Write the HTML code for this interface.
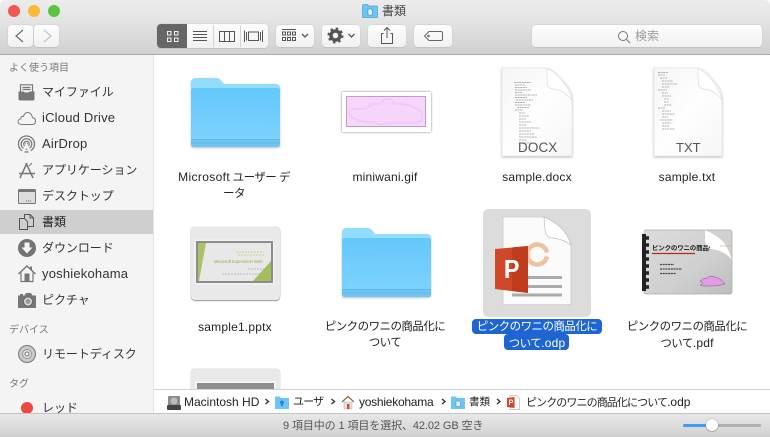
<!DOCTYPE html>
<html><head><meta charset="utf-8"><style>
html,body{margin:0;padding:0;background:#fff}
#w{position:relative;width:770px;height:437px;overflow:hidden;background:#fff;font-family:"Liberation Sans","Noto Sans CJK JP",sans-serif;color:#222}
#w>*{position:absolute}
.b{background:linear-gradient(#fdfdfd,#f1f1f1);border-radius:4px;box-shadow:0 0 0 .5px #cdcdcd,0 1px 0 #bbb;top:25px;height:22px}
.s{left:42px;font-size:12px;line-height:16px;color:#333;white-space:nowrap;letter-spacing:-.05px}
.e{letter-spacing:.2px;font-size:13px}
.h{left:9px;font-size:10px;line-height:14px;color:#777;white-space:nowrap}
.l{font-size:11.5px;line-height:16px;color:#222;white-space:nowrap;text-align:center;letter-spacing:-.55px;transform:translateX(-50%)}
.n{letter-spacing:.2px;font-size:12px}
.p{top:394px;font-size:12px;line-height:16px;color:#222;white-space:nowrap}
svg{position:absolute;overflow:visible}
</style></head><body><div id="w">

<div style="left:0;top:0;width:770px;height:54px;background:linear-gradient(#ececec,#e6e6e6 30%,#d1d1d1);border-bottom:1px solid #a9a9a9;border-radius:5px 5px 0 0"></div>
<div style="left:8px;top:5px;width:12px;height:12px;border-radius:50%;background:#f25750"></div>
<div style="left:28px;top:5px;width:12px;height:12px;border-radius:50%;background:#fbb93a"></div>
<div style="left:48px;top:5px;width:12px;height:12px;border-radius:50%;background:#5cc341"></div>

<svg style="left:362px;top:4px" width="16" height="14" viewBox="0 0 16 14"><path d="M.5 2Q.5 .5 2 .5H5.500L7 2H15.500V13.500H.5Z" fill="#6cc5f5" stroke="#4ba3d8" stroke-width=".7"/><path d="M6 5H9L10.500 6.500V11H6Z" fill="#e8f6fe" stroke="#2b86c0" stroke-width=".6"/></svg>
<div style="left:382px;top:3px;font-size:12px;line-height:16px;color:#444">書類</div>

<!-- nav -->
<div class="b" style="left:8px;width:25px"></div>
<div class="b" style="left:34px;width:25px"></div>
<svg style="left:8px;top:25px" width="52" height="22"><path d="M15 5L8 11L15 17" fill="none" stroke="#6a6a6a" stroke-width="1.200"/><path d="M36 5L43 11L36 17" fill="none" stroke="#c4c4c4" stroke-width="1.200"/></svg>

<!-- view seg -->
<div class="b" style="left:157px;width:111px;top:24px;height:24px"></div>
<div style="left:157px;top:24px;width:30px;height:24px;background:#666;border-radius:4px 0 0 4px"></div>
<div style="left:213px;top:25px;width:1px;height:22px;background:#d5d5d5"></div>
<div style="left:240px;top:25px;width:1px;height:22px;background:#d5d5d5"></div>
<svg style="left:157px;top:24px" width="111" height="24" fill="none" stroke-width="1">
<g stroke="#f0f0f0"><rect x="10.500" y="7.500" width="3.500" height="3.500"/><rect x="17.500" y="7.500" width="3.500" height="3.500"/><rect x="10.500" y="14" width="3.500" height="3.500"/><rect x="17.500" y="14" width="3.500" height="3.500"/></g>
<g stroke="#555"><path d="M36 7.500H50M36 10.500H50M36 13.500H50M36 16.500H50"/><rect x="62.500" y="7.500" width="15" height="10"/><path d="M67.500 7.500V17.500M72.500 7.500V17.500"/><rect x="91.500" y="8" width="10" height="8.500"/><path d="M89.500 8V16.500M103.500 8V16.500M105.500 6.500V18M87.500 6.500V18"/></g></svg>

<div class="b" style="left:276px;width:38px;top:25px;height:22px"></div>
<svg style="left:276px;top:25px" width="38" height="22" fill="none" stroke="#555"><path d="M6 4.500H20"/><rect x="6.500" y="7" width="3" height="3"/><rect x="11.500" y="7" width="3" height="3"/><rect x="16.500" y="7" width="3" height="3"/><rect x="6.500" y="12.500" width="3" height="3"/><rect x="11.500" y="12.500" width="3" height="3"/><rect x="16.500" y="12.500" width="3" height="3"/><path d="M26 9L29 12L32 9" stroke-width="1.300"/></svg>

<div class="b" style="left:322px;width:38px;top:25px;height:22px"></div>
<svg style="left:322px;top:25px" width="38" height="22" fill="none"><circle cx="13.500" cy="10.500" r="4.500" stroke="#555" stroke-width="3.500"/><circle cx="13.500" cy="10.500" r="7" stroke="#555" stroke-width="2" stroke-dasharray="2.500 3"/><path d="M26.500 9L29.500 12L32.500 9" stroke="#555" stroke-width="1.300"/></svg>

<div class="b" style="left:368px;width:38px;top:25px;height:22px"></div>
<svg style="left:368px;top:25px" width="38" height="22" fill="none" stroke="#555"><path d="M15.500 8.500H13.500V18.500H24.500V8.500H22.500M19 13V2.500M16 5.500L19 2.500L22 5.500"/></svg>

<div class="b" style="left:414px;width:38px;top:25px;height:22px"></div>
<svg style="left:414px;top:25px" width="38" height="22" fill="none" stroke="#666"><path d="M15 6.500H27Q28.500 6.500 28.500 8V14Q28.500 15.500 27 15.500H15L10.500 11Z"/><circle cx="14.500" cy="11" r=".8"/></svg>

<div class="b" style="left:532px;width:230px;top:25px;height:22px"></div>
<svg style="left:617px;top:30px" width="14" height="14" fill="none" stroke="#777"><circle cx="6" cy="6" r="4.500"/><path d="M9.500 9.500L13 13"/></svg>
<div style="left:635px;top:28px;font-size:12px;line-height:16px;color:#9a9a9a">検索</div>

<!-- sidebar -->
<div style="left:0;top:55px;width:153px;height:358px;background:#f4f4f4;border-right:1px solid #e3e3e3;overflow:hidden"></div>
<div style="left:0;top:210px;width:153px;height:24px;background:#cfcfcf"></div>

<div class="h" style="top:62px">よく使う項目</div>
<div class="s" style="top:84px">マイファイル</div>
<div class="s e" style="top:110px">iCloud Drive</div>
<div class="s e" style="top:136px">AirDrop</div>
<div class="s" style="top:162px">アプリケーション</div>
<div class="s" style="top:188px">デスクトップ</div>
<div class="s" style="top:214px;color:#222">書類</div>
<div class="s" style="top:240px">ダウンロード</div>
<div class="s e" style="top:266px">yoshiekohama</div>
<div class="s" style="top:292px">ピクチャ</div>
<div class="h" style="top:324px">デバイス</div>
<div class="s" style="top:346px">リモートディスク</div>
<div class="h" style="top:378px">タグ</div>
<div class="s" style="top:400px">レッド</div>

<svg style="left:17px;top:84px" width="20" height="16" fill="none" stroke="#777"><path d="M3.500 .8H15.500V9H3.500ZM5.500 3.500H13.500M5.500 5.500H13.500" stroke-width="1.200"/><path d="M2 8H6.500L7.500 10H11.500L12.500 8H17V15Q17 16 16 16H3Q2 16 2 15Z" fill="#777"/></svg>
<svg style="left:17px;top:110px" width="20" height="16" fill="none" stroke="#777"><path d="M5 14.500H15Q18.500 14.500 18.500 11Q18.500 8 15.500 7.800Q14.500 2.500 10.500 2.500Q7.500 2.500 6.500 6.500Q4 5.500 3.800 8.800Q1 9.500 1 11.800Q1 14.500 5 14.500Z" stroke-width="1"/></svg>
<svg style="left:17px;top:135px" width="20" height="18" fill="none" stroke="#777"><circle cx="9.500" cy="9" r="8" stroke-width="1.300"/><circle cx="9.500" cy="9" r="5.300" stroke-width="1.200"/><circle cx="9.500" cy="9" r="2.800" stroke-width="1.200"/><circle cx="9.500" cy="9" r="1" fill="#777"/><path d="M6 17L9.500 10L13 17" stroke="#f4f4f4" stroke-width="2.500"/></svg>
<svg style="left:17px;top:161px" width="20" height="18" fill="none" stroke="#777" stroke-width="1.500"><path d="M10 2L3 17M9 2L16 17M2 12.500H18"/><path d="M12 5L15 2" stroke-width="1"/></svg>
<svg style="left:18px;top:189px" width="18" height="15" fill="none"><rect x=".5" y=".5" width="17" height="14" rx="1" fill="#ddd" stroke="#777"/><rect x=".5" y=".5" width="17" height="2.500" fill="#777"/><path d="M8 12H13" stroke="#666" stroke-dasharray="1 1"/></svg>
<svg style="left:19px;top:214px" width="18" height="17" fill="none" stroke="#555"><path d="M5.500 4.500V.5H11L14.500 4V12.500H8.500"/><path d="M.5 4.500H5.500L8.500 7.500V15.500H.5ZM11 .5V4H14.500"/></svg>
<svg style="left:18px;top:239px" width="18" height="18"><circle cx="9" cy="9" r="9" fill="#737373"/><path d="M6.500 3.500H11.500V8.500H14.500L9 14.500L3.500 8.500H6.500Z" fill="#f4f4f4"/></svg>
<svg style="left:18px;top:265px" width="18" height="17" fill="none" stroke="#777"><path d="M.5 9L9 1L17.500 9" stroke-width="1.400"/><path d="M3 7.500V16.500H15V7.500" stroke-width="1.200"/><rect x="7" y="9" width="4" height="7.500" fill="#777"/><path d="M13 1.500V5" stroke-width="2"/></svg>
<svg style="left:18px;top:293px" width="18" height="15"><path d="M0 2.500H2V1H5V2.500H6.500L8 0H13L14.500 2.500H18V15H0Z" fill="#777"/><circle cx="10" cy="8.500" r="4.500" fill="#ddd" stroke="#666"/><circle cx="10" cy="8.500" r="2.500" fill="#999"/></svg>
<svg style="left:18px;top:345px" width="18" height="18"><circle cx="9" cy="9" r="8.500" fill="#c9c9c9" stroke="#777"/><circle cx="9" cy="9" r="4.500" fill="#e2e2e2" stroke="#999"/><circle cx="9" cy="9" r="2" fill="#f4f4f4" stroke="#777"/></svg>
<div style="left:21px;top:402px;width:12px;height:12px;background:#f0483e;border-radius:50%"></div>

<!-- row 1 -->
<svg style="left:190px;top:77px;filter:drop-shadow(0 1px 1px rgba(0,0,0,.25))" width="91" height="72" viewBox="0 0 91 72">
<defs><linearGradient id="g" x1="0" y1="0" x2="0" y2="1"><stop offset="0" stop-color="#64c8fb"/><stop offset="1" stop-color="#80d3fd"/></linearGradient>
<linearGradient id="pg" x1="0" y1="0" x2="1" y2="1"><stop offset="0" stop-color="#f5f5f5"/><stop offset=".5" stop-color="#fefefe"/><stop offset="1" stop-color="#f6f6f6"/></linearGradient></defs>
<g id="folder"><path d="M1 6Q1 1 6 1H26Q29 1 31 3.500L34 7H86Q90 7 90 12V20H1Z" fill="#93dcfd"/><path d="M1 14Q1 11 4 11H87Q90 11 90 14V67Q90 70 87 70H4Q1 70 1 67Z" fill="url(#g)"/><path d="M1 62H90V67Q90 70 87 70H4Q1 70 1 67Z" fill="#6fc5f1"/><path d="M1 62.500H90M1 66H90" stroke="#5db6e6" stroke-width="1" opacity=".8"/></g></svg>
<div class="l" style="left:234px;top:169px"><span class="n" style="letter-spacing:.35px">Microsoft</span> ユーザー デ<br>ータ</div>

<div style="left:342px;top:92px;width:89px;height:40px;background:#fff;box-shadow:0 0 2px rgba(0,0,0,.55)"></div>
<svg style="left:346px;top:96px" width="80" height="31"><rect x=".5" y=".5" width="79" height="30" fill="#f6d5fb" stroke="#c09ec2"/><path d="M3 15L7 13H20L25 8H35L38 3H45L48 8H55L62 9L70 12L76 16L76 24L70 27H40L35 29L28 26L18 26L6 22L3 18Z" fill="none" stroke="#f3c4f9" stroke-width="1.500"/></svg>
<div class="l n" style="left:385px;top:169px">miniwani.gif</div>

<svg style="left:501px;top:67px;filter:drop-shadow(0 1px 1px rgba(0,0,0,.28))" width="72" height="90" viewBox="0 0 72 90">
<path d="M1 1H42Q50 1 57 9L63 15Q71 23 71 32V89H1Z" fill="url(#pg)" stroke="#e6e6e6" stroke-width=".7"/>
<path d="M46 1Q46 16 47 19Q48 21.500 52 22Q62 22.500 71 33Q68 20 58 10Q52 4 46 1Z" fill="#fff" stroke="#dcdcdc" stroke-width=".7"/>
<path d="M13 15.500H30M14 18H24M14 20.500H26M14 23H30M14 25.500H22M14 28H36M14 30.500H26M15 33H32M14 35.500H24M14 38H30M16 40.500H28M14 43H22M18 46H24M18 49H28M18 52H25M18 55H30M18 58H26M18 61H38M18 64H30M18 67H34M18 70H36M18 73H26M18 76H30" stroke="#999" stroke-width=".7" stroke-dasharray="2 .6" fill="none"/></svg>
<div style="left:518px;top:140px;font-size:13.500px;line-height:16px;color:#555;letter-spacing:.1px">DOCX</div>
<div class="l n" style="left:537px;top:169px">sample.docx</div>

<svg style="left:653px;top:67px;filter:drop-shadow(0 1px 1px rgba(0,0,0,.28))" width="70" height="90" viewBox="0 0 70 90">
<path d="M1 1H42Q50 1 56 8L62 15Q69 23 69 32V89H1Z" fill="url(#pg)" stroke="#e6e6e6" stroke-width=".7"/>
<path d="M45 1Q45 16 46 19Q47 21.500 51 22Q61 22.500 69 33Q66 20 56 10Q50 4 45 1Z" fill="#fff" stroke="#dcdcdc" stroke-width=".7"/>
<path d="M5 5.500H15M5 8H12M7 11H14M9 14H20M9 17H24M9 20H16M5 23H14M9 26H15M9 29H18M11 32H16M11 35H16M11 38H19M5 41H12M9 44H18M9 47H22M9 50H15M7 53H20M9 56H18M9 59H16M9 62H22" stroke="#999" stroke-width=".7" stroke-dasharray="2 .6" fill="none"/></svg>
<div style="left:676px;top:140px;font-size:13px;line-height:16px;color:#555">TXT</div>
<div class="l n" style="left:687px;top:169px">sample.txt</div>

<!-- row 2 -->
<div style="left:191px;top:227px;width:89px;height:73px;background:#e9e9e9;border-radius:4px;box-shadow:0 0 1px #999,0 1px 1px #999"></div>
<svg style="left:194px;top:239px" width="81" height="46" viewBox="0 0 81 46"><rect x=".5" y=".5" width="80" height="45" fill="#f3f3f3"/><rect x="3" y="3" width="75" height="40" fill="#e8e8e8" stroke="#8c8c8c" stroke-width="2"/><path d="M4 4H12L5 42H4Z" fill="#a9c267"/><path d="M77 22V42H59Z" fill="#a3bf5b"/></svg>
<div style="left:214px;top:258px;font-size:4.200px;line-height:8px;color:#98ab50;white-space:nowrap">Microsoft Expression Web</div>
<svg style="left:194px;top:239px" width="81" height="46"><path d="M42 13H70M44 16H70" stroke="#c3d08f" stroke-width="1" stroke-dasharray="2 1"/><path d="M54 30H72M28 35H70" stroke="#aaa" stroke-width=".8" stroke-dasharray="2 1"/></svg>
<div class="l n" style="left:235px;top:319px">sample1.pptx</div>

<svg style="left:341px;top:227px;filter:drop-shadow(0 1px 1px rgba(0,0,0,.25))" width="91" height="72" viewBox="0 0 91 72"><use href="#folder"/></svg>
<div class="l" style="left:385px;top:319px">ピンクのワニの商品化に<br>ついて</div>

<div style="left:483px;top:209px;width:108px;height:108px;background:#dcdcdc;border-radius:5px"></div>
<svg style="left:495px;top:216px" width="80" height="90" viewBox="0 0 80 90">
<path d="M8 1H49L76 28V88.500H8Z" fill="#fbfbfb" stroke="#ccc" stroke-width=".8"/>
<path d="M49 1Q50 17 51 18Q53 22 58 22Q68 23 76 29Q73 18 64 10Q57 4 49 1Z" fill="#fff" stroke="#bbb" stroke-width=".7"/>
<path d="M52 36.500A10 10 0 1 0 52 40.500" fill="none" stroke="#efc19c" stroke-width="4.500"/>
<path d="M33 60H67V63H33ZM33 69H67V72H33ZM17 77.500H67V80.500H17Z" fill="#ababab"/>
<path d="M0 33L33 30V77L0 73Z" fill="#d0482a"/><path d="M17 31.500L33 30V77L17 75Z" fill="#c13c1d"/></svg>
<div style="left:503px;top:249px;font-size:26px;line-height:40px;font-weight:bold;color:#fff;transform:scaleX(.9)">P</div>

<svg style="left:642px;top:230px" width="91" height="65" viewBox="0 0 91 65">
<defs><linearGradient id="pd" x1="0" y1="0" x2="1" y2="1"><stop offset="0" stop-color="#dcdcdc"/><stop offset=".6" stop-color="#cfcfcf"/><stop offset="1" stop-color="#bdbdbd"/></linearGradient></defs>
<rect x="2" y="0" width="88" height="64" rx="2" fill="url(#pd)" stroke="#aaa" stroke-width=".7"/>
<rect x="0" y="4" width="4" height="57" fill="#222"/><path d="M4 8H7M4 15H7M4 22H7M4 29H7M4 36H7M4 43H7M4 50H7M4 57H7" stroke="#222" stroke-width="3.500"/>
<path d="M63 0Q62 13 64 16Q68 20 73 20Q83 22 90 30Q87 17 80 10Q72 3 63 0Z" fill="#fff" stroke="#ccc" stroke-width=".6"/>
<path d="M10 23.500H53" stroke="#b8281d" stroke-width="1.200"/><path d="M78 16H90" stroke="#d9a07e" stroke-width=".6"/>
<path d="M18 34.500H32M18 39H40M18 43.500H34" stroke="#444" stroke-width="1.200" stroke-dasharray="2 .7"/>
<path d="M58 51Q61 48 65 48L68 46L73 47Q80 49 83 54Q77 56 71 56H62L58 55Q63 53 58 51Z" fill="#e49ae8" stroke="#666" stroke-width=".5"/></svg>
<div style="left:652px;top:245px;font-size:6.500px;line-height:8px;letter-spacing:-.2px;color:#222;white-space:nowrap;font-weight:bold;width:58px;overflow:hidden">ピンクのワニの商品化につ</div>
<div class="l" style="left:687px;top:319px">ピンクのワニの商品化に<br><span>ついて</span><span class="n">.pdf</span></div>

<div style="left:472px;top:319px;width:130px;height:15px;background:#1e65d3;border-radius:4px"></div>
<div style="left:504px;top:334px;width:65px;height:16px;background:#1e65d3;border-radius:4px"></div>
<div class="l" style="left:537px;top:319px;color:#fff">ピンクのワニの商品化に<br>ついて<span class="n">.odp</span></div>

<!-- row 3 -->
<div style="left:191px;top:369px;width:89px;height:30px;background:#e9e9e9;border-radius:4px;box-shadow:0 0 1px #999"></div>
<div style="left:195px;top:381px;width:81px;height:10px;background:#f3f3f3"></div>
<div style="left:197px;top:383px;width:77px;height:8px;background:#8e8e8e"></div>

<!-- path bar -->
<div style="left:154px;top:389px;width:616px;height:23px;background:#fff;border-top:1px solid #d2d2d2;border-bottom:1px solid #d0d0d0"></div>
<div style="left:0;top:413px;width:770px;height:24px;background:linear-gradient(#e8e8e8,#d0d0d0);border-top:1px solid #c2c2c2;box-sizing:border-box"></div>

<svg style="left:167px;top:396px" width="14" height="14"><rect x="1" y="0" width="12" height="10" rx="1" fill="#8a8a8a"/><circle cx="7" cy="5" r="3.500" fill="#bbb"/><rect x="0" y="9" width="14" height="5" rx="1" fill="#444"/></svg>
<div class="p" style="left:184px">Macintosh HD</div>
<svg style="left:154px;top:389px" width="360" height="24" fill="none" stroke="#333" stroke-width="1.400"><path d="M111.500 10L114.500 12.500L111.500 15M177.500 10L180.500 12.500L177.500 15M288 10L291 12.500L288 15M343 10L346 12.500L343 15"/></svg>
<svg style="left:275px;top:396px" width="14" height="13"><path d="M0 1.500Q0 .5 1 .5H4.500L6 2H14V13H0Z" fill="#6cc5f5"/><path d="M5 6.500A2 2 0 0 1 9 6.500V7.500L8 8V10H6V8L5 7.500Z" fill="#2a86c2"/></svg>
<div class="p" style="left:293px;font-size:11px;letter-spacing:-.8px">ユーザ</div>
<svg style="left:342px;top:396px" width="12" height="13"><path d="M0 6L6 .5L12 6" fill="none" stroke="#8a6b50" stroke-width="1.200"/><path d="M2 6H10V13H2Z" fill="#e8e2d8" stroke="#aaa" stroke-width=".5"/><rect x="5" y="8" width="2.500" height="5" fill="#c9512e"/></svg>
<div class="p" style="left:359px;letter-spacing:-.25px">yoshiekohama</div>
<svg style="left:451px;top:396px" width="14" height="13"><path d="M0 1.500Q0 .5 1 .5H4.500L6 2H14V13H0Z" fill="#6cc5f5"/><path d="M5 5H8L9.500 6.500V10.500H5Z" fill="#e8f6fe" stroke="#2b86c0" stroke-width=".5"/></svg>
<div class="p" style="left:469px;font-size:10.500px">書類</div>
<svg style="left:507px;top:395px" width="13" height="15"><path d="M3 .5H9.500L12.500 3.500V14.500H3Z" fill="#fafafa" stroke="#bbb" stroke-width=".7"/><path d="M0 3L7.500 2V13L0 12Z" fill="#cf4526"/><path d="M2.500 10V5H4.500Q5.500 5 5.500 6.200T4.500 7.500H3" fill="none" stroke="#fff"/></svg>
<div class="p" style="left:526px;font-size:11px;letter-spacing:-.9px">ピンクのワニの商品化について<span style="letter-spacing:0;font-size:12px">.odp</span></div>

<!-- status -->
<div style="left:283px;top:418px;font-size:11px;line-height:16px;color:#555;white-space:nowrap;letter-spacing:-.1px">9 項目中の 1 項目を選択、42.02 GB 空き</div>
<div style="left:683px;top:423.500px;width:78px;height:3px;background:#adadad;border-radius:2px"></div>
<div style="left:683px;top:423.500px;width:30px;height:3px;background:#3f9bf7;border-radius:2px"></div>
<div style="left:706px;top:419px;width:12px;height:12px;background:#fff;border-radius:50%;box-shadow:0 0 1px #777,0 .5px 1px #888"></div>

</div></body></html>
